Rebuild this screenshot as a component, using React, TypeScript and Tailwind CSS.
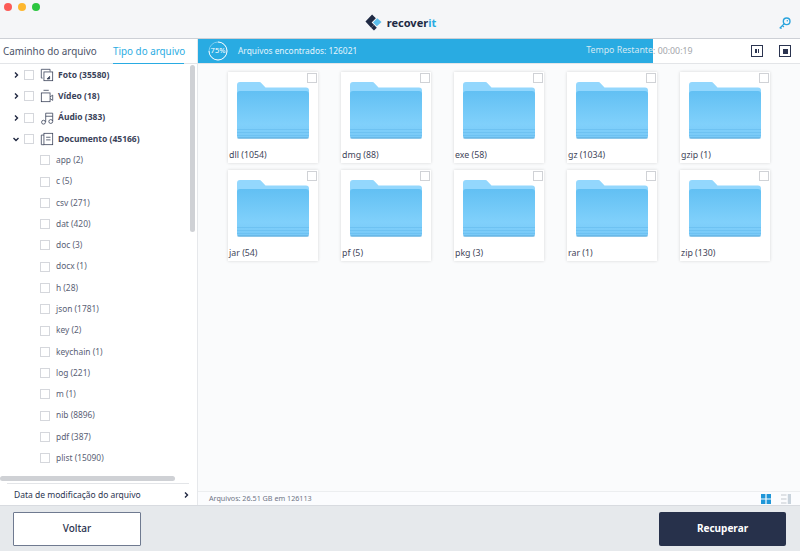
import React from "react";

const cats = [
  { label: "Foto (35580)", icon: "foto", open: false },
  { label: "Vídeo (18)", icon: "video", open: false },
  { label: "Áudio (383)", icon: "audio", open: false },
  { label: "Documento (45166)", icon: "doc", open: true },
];
const subs = ["app (2)", "c (5)", "csv (271)", "dat (420)", "doc (3)", "docx (1)", "h (28)", "json (1781)", "key (2)", "keychain (1)", "log (221)", "m (1)", "nib (8896)", "pdf (387)", "plist (15090)"];
const folders = ["dll (1054)", "dmg (88)", "exe (58)", "gz (1034)", "gzip (1)", "jar (54)", "pf (5)", "pkg (3)", "rar (1)", "zip (130)"];

function CatIcon({ kind }: { kind: string }) {
  const c = { fill: "none", stroke: "#3a4259", strokeWidth: 0.9 } as const;
  return (
    <svg width="14" height="14" viewBox="0 0 16 16" className="shrink-0">
      {kind === "foto" && (
        <g {...c}>
          <path d="M3 11.5H1.5V1.5H11.5V4" />
          <rect x="4.5" y="4.5" width="10" height="10" />
          <path d="M8 12.5l3-3v3z" fill="#3a4259" />
        </g>
      )}
      {kind === "video" && (
        <g {...c}>
          <path d="M4 1.5H10" />
          <rect x="1.5" y="4.5" width="10" height="10" />
          <path d="M11.5 9l3-2v6l-3-2" />
        </g>
      )}
      {kind === "audio" && (
        <g {...c}>
          <path d="M6.5 12.5V2.5H14.5V11.5M6.5 6H14.5" />
          <circle cx="4" cy="12.8" r="2.2" />
          <circle cx="12.3" cy="12" r="2.2" />
        </g>
      )}
      {kind === "doc" && (
        <g {...c}>
          <path d="M4.5 3.5H1.5V14.5H4.5" />
          <rect x="4.5" y="1.5" width="10" height="13" />
          <path d="M7 6H12M7 9H12" />
        </g>
      )}
    </svg>
  );
}

function Chevron({ open }: { open: boolean }) {
  return (
    <svg width="8" height="8" viewBox="0 0 8 8" className="shrink-0">
      <path d={open ? "M1.5 3L4 5.5L6.5 3" : "M3 1.5L5.5 4L3 6.5"} fill="none" stroke="#1f2740" strokeWidth="1.4" />
    </svg>
  );
}

function Folder() {
  return (
    <svg width="72" height="57" viewBox="0 0 72 57" className="block">
      <defs>
        <linearGradient id="fb" x1="0" y1="0" x2="0" y2="1">
          <stop offset="0" stopColor="#62c0f3" />
          <stop offset="0.7" stopColor="#80d0fb" />
          <stop offset="1" stopColor="#78c9f7" />
        </linearGradient>
      </defs>
      <path d="M0 3a3 3 0 0 1 3-3h19a3 3 0 0 1 2.5 1.2L28.5 5.5H69a3 3 0 0 1 3 3V20H0z" fill="#93d7fd" />
      <path d="M0 12a3 3 0 0 1 3-3h66a3 3 0 0 1 3 3v42a2.5 2.5 0 0 1-2.5 2.5h-67A2.5 2.5 0 0 1 0 54z" fill="url(#fb)" />
      <path d="M0 47.5h72M0 50.5h72M0 53.5h72" stroke="#68bdee" strokeWidth="0.9" opacity="0.75" />
      <path d="M0.5 56h71" stroke="#5ca8d8" strokeWidth="1" />
    </svg>
  );
}

export default function App() {
  return (
    <div className="w-[800px] h-[551px] overflow-hidden flex flex-col bg-white text-[#2b3450]" style={{ fontFamily: '"Noto Sans", "Open Sans", sans-serif' }}>
      <header className="relative h-[39px] shrink-0 flex items-center justify-center bg-[#f5f6f8] border-b border-[#cdd0d6]">
        <div className="absolute left-[4px] top-[3px] flex gap-[6px]">
          <span className="w-[8px] h-[8px] rounded-full bg-[#fc5b57]" />
          <span className="w-[8px] h-[8px] rounded-full bg-[#fdb72f]" />
          <span className="w-[8px] h-[8px] rounded-full bg-[#2cc640]" />
        </div>
        <div className="flex items-center gap-[5px] mt-[7px] ml-[1px]">
          <svg width="17" height="17" viewBox="0 0 18 18">
            <path d="M7.5 0.5L11.5 4.5L7 9L9.5 11.5L6.5 14.5L0.5 8z" fill="#1f2a44" />
            <path d="M9.5 11.5L12.5 14.5L9.5 17.5L6.5 14.5z" fill="#1f2a44" />
            <path d="M13 4.5L17.5 8.5L12.5 13L8.5 9z" fill="#5cbfec" />
          </svg>
          <span className="text-[11px] font-bold leading-none text-[#1f2a44]">
            recover<span className="text-[#29abe2]">it</span>
          </span>
        </div>
        <svg width="12" height="12" viewBox="0 0 13 13" className="absolute left-[779px] top-[17px]">
          <circle cx="8.3" cy="4.7" r="3.6" fill="none" stroke="#29a3dd" strokeWidth="1.5" />
          <circle cx="9" cy="4" r="0.8" fill="#29a3dd" />
          <path d="M5.7 7.3L1.3 11.7L2.8 12.5M3.8 9.3L5.3 10.8" fill="none" stroke="#29a3dd" strokeWidth="1.4" />
        </svg>
      </header>

      <div className="flex-1 flex min-h-0">
        <aside className="relative w-[198px] shrink-0 flex flex-col border-r border-[#e6e8eb] bg-white">
          <div className="h-[25px] shrink-0 flex text-[9.85px] leading-[24px] border-b border-[#e3e5e8] whitespace-nowrap">
            <span className="pl-[3px] w-[113px] text-[#4a5166]">Caminho do arquivo</span>
            <span className="relative w-[72px] text-[#29abe2]">
              Tipo do arquivo
              <span className="absolute left-0 right-[1px] bottom-[-1px] h-[1px] bg-[#29abe2]" />
            </span>
          </div>
          <div className="flex-1 min-h-0 overflow-hidden flex flex-col pt-[0.4px]">
            {cats.map((c) => (
              <div key={c.label} className="h-[21.3px] shrink-0 flex items-center pl-[12px]">
                <Chevron open={c.open} />
                <span className="ml-[4px] w-[10px] h-[10px] border border-[#d5d7dc] bg-white shrink-0" />
                <span className="ml-[6px]"><CatIcon kind={c.icon} /></span>
                <span className="ml-[4px] text-[8.5px] font-bold text-[#3a4259] whitespace-nowrap">{c.label}</span>
              </div>
            ))}
            {subs.map((s) => (
              <div key={s} className="h-[21.3px] shrink-0 flex items-center pl-[40px]">
                <span className="w-[10px] h-[10px] border border-[#d5d7dc] bg-white shrink-0" />
                <span className="ml-[6px] text-[8.4px] text-[#5a6175] whitespace-nowrap">{s}</span>
              </div>
            ))}
          </div>
          <div className="h-[22px] shrink-0 ml-[7px] mr-[8px] border-t border-[#e3e5e8] flex items-center justify-between text-[8.5px] text-[#2b3450]">
            <span className="ml-[7px] mt-[1px]">Data de modificação do arquivo</span>
            <span className="mr-[-1px]"><Chevron open={false} /></span>
          </div>
          <div className="absolute left-[190px] top-[26px] w-[5px] h-[167px] rounded-full bg-[#cfd1d5]" />
          <div className="absolute left-0 top-[437px] w-[175px] h-[5px] rounded-full bg-[#cfd1d5]" />
        </aside>

        <main className="flex-1 min-w-0 flex flex-col bg-[#fafbfc]">
          <div className="h-[25px] shrink-0 flex bg-white border-b border-[#e3e5e8] items-stretch">
            <div className="w-[455px] h-[24px] bg-[#29abe2] flex items-center pl-[10px] text-white">
              <div className="relative w-[20px] h-[20px] flex items-center justify-center">
                <svg width="20" height="20" viewBox="0 0 20 20" className="absolute inset-0">
                  <circle cx="10" cy="10" r="9" fill="none" stroke="#7fcdf0" strokeWidth="1" />
                  <path d="M10 1a9 9 0 1 1-9 9" fill="none" stroke="#ffffff" strokeWidth="1" opacity="0.85" />
                </svg>
                <span className="text-[7.5px] leading-none">75%</span>
              </div>
              <span className="ml-[10px] text-[8.4px] text-[#e4f4fc]">Arquivos encontrados: 126021</span>
              <span className="ml-auto text-[8.8px] text-[#d4e9f3] whitespace-nowrap">Tempo Restante</span>
            </div>
            <span className="text-[8.8px] leading-[24px] text-[#a3a6ab] whitespace-nowrap">: 00:00:19</span>
            <div className="ml-auto flex items-center gap-[16px] pr-[9px]">
              <span className="w-[12px] h-[12px] border border-[#2b3450] flex items-center justify-center gap-[1px]">
                <span className="w-[1.5px] h-[4px] bg-[#2b3450]" />
                <span className="w-[1.5px] h-[4px] bg-[#2b3450]" />
              </span>
              <span className="w-[12px] h-[12px] border border-[#2b3450] flex items-center justify-center">
                <span className="w-[5px] h-[5px] bg-[#2b3450]" />
              </span>
            </div>
          </div>

          <div className="flex-1 min-h-0 pl-[29.5px] pt-[8px]">
            <div className="grid grid-cols-[repeat(5,90.5px)] gap-x-[22.5px] gap-y-[7.5px]">
              {folders.map((f) => (
                <div key={f} className="relative h-[90.5px] bg-white shadow-[0_0_3px_rgba(0,0,0,0.15)]">
                  <span className="absolute right-[1px] top-[1px] w-[10px] h-[10px] border border-[#d0d2d6] bg-white" />
                  <div className="pl-[9.5px] pt-[9.5px]"><Folder /></div>
                  <div className="pl-[1.5px] text-[8.8px] leading-[12px] mt-[10.5px] text-[#3f465a]">{f}</div>
                </div>
              ))}
            </div>
          </div>

          <div className="h-[14px] shrink-0 flex items-center justify-between border-t border-[#eceef0] bg-[#fbfcfe] pl-[11px] pr-[9px]">
            <span className="text-[7.2px] text-[#6f7585]">Arquivos: 26.51 GB em 126113</span>
            <div className="flex items-center gap-[10px]">
              <svg width="10" height="10" viewBox="0 0 10 10">
                <path d="M0 0h4.4v4.4H0zM5.6 0H10v4.4H5.6zM0 5.6h4.4V10H0zM5.6 5.6H10V10H5.6z" fill="#1f96d8" />
              </svg>
              <svg width="10" height="10" viewBox="0 0 10 10">
                <path d="M0 1h5.5M0 5h5.5M0 9h5.5" stroke="#c3c7cd" strokeWidth="1.2" />
                <rect x="6.8" y="0" width="3.2" height="10" fill="#c9d3dc" />
              </svg>
            </div>
          </div>
        </main>
      </div>

      <footer className="h-[46px] shrink-0 flex items-center justify-between bg-[#e6e9ec] border-t border-[#d8dbe0] pl-[13px] pr-[14px]">
        <button className="w-[128px] h-[34px] bg-white border border-[#6f7a90] rounded-[1px] text-[10px] font-medium text-[#2b3450]">Voltar</button>
        <button className="w-[127px] h-[34px] bg-[#27314b] rounded-[2px] text-[10px] font-bold text-white">Recuperar</button>
      </footer>
    </div>
  );
}
